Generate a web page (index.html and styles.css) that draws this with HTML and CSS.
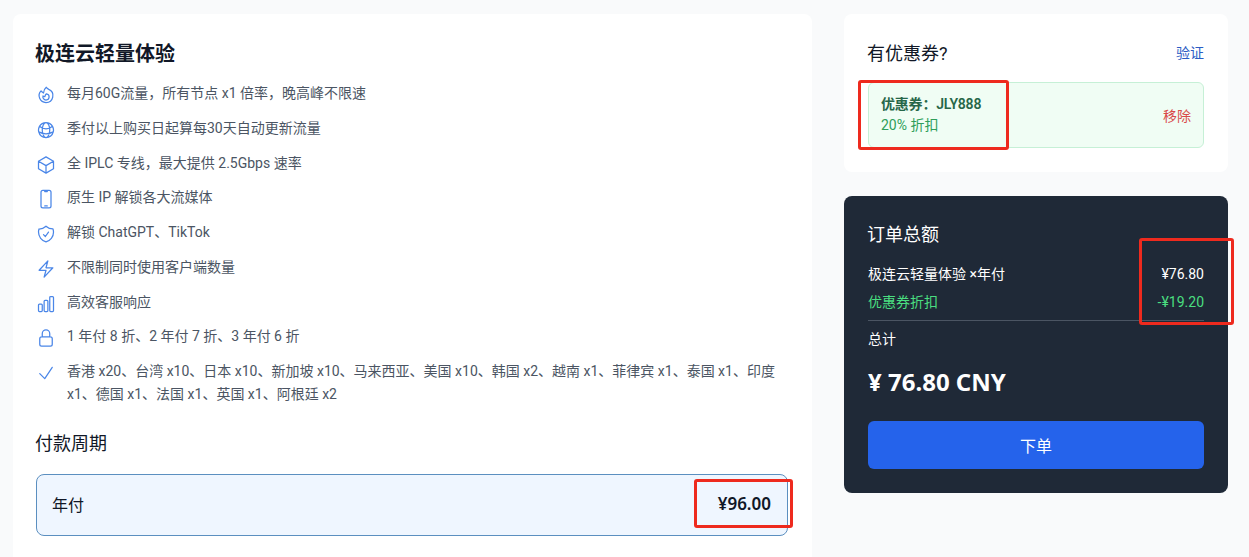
FILE: index.html
```html
<!DOCTYPE html>
<html lang="zh-CN">
<head>
<meta charset="utf-8">
<title>极连云轻量体验</title>
<link rel="stylesheet" href="styles.css">
</head>
<body>
<main class="layout">
  <section class="plan card">
    <h1 class="plan-title">极连云轻量体验</h1>
    <ul class="features">
      <li class="feature">
        <svg class="icon" viewBox="0 0 24 24"><path d="M15.362 5.214A8.252 8.252 0 0 1 12 21 8.25 8.25 0 0 1 6.038 7.047 8.287 8.287 0 0 0 9 9.601a8.983 8.983 0 0 1 3.361-6.867 8.21 8.21 0 0 0 3 2.48Z"/><path d="M12 18a3.75 3.75 0 0 0 .495-7.468 5.99 5.99 0 0 0-1.925 3.547 5.975 5.975 0 0 1-2.133-1.001A3.75 3.75 0 0 0 12 18Z"/></svg>
        <span class="feature-text">每月60G流量，所有节点 x1 倍率，晚高峰不限速</span>
      </li>
      <li class="feature">
        <svg class="icon" viewBox="0 0 24 24"><path d="M12 21a9.004 9.004 0 0 0 8.716-6.747M12 21a9.004 9.004 0 0 1-8.716-6.747M12 21c2.485 0 4.5-4.03 4.5-9S14.485 3 12 3m0 18c-2.485 0-4.5-4.03-4.5-9S9.515 3 12 3m0 0a8.997 8.997 0 0 1 7.843 4.582M12 3a8.997 8.997 0 0 0-7.843 4.582m15.686 0A11.953 11.953 0 0 1 12 10.5c-2.998 0-5.74-1.1-7.843-2.918m15.686 0A8.959 8.959 0 0 1 21 12c0 .778-.099 1.533-.284 2.253m0 0A17.919 17.919 0 0 1 12 16.5c-3.162 0-6.133-.815-8.716-2.247m0 0A9.015 9.015 0 0 1 3 12c0-1.605.42-3.113 1.157-4.418"/></svg>
        <span class="feature-text">季付以上购买日起算每30天自动更新流量</span>
      </li>
      <li class="feature">
        <svg class="icon" viewBox="0 0 24 24"><path d="m21 7.5-9-5.25L3 7.5m18 0-9 5.25m9-5.25v9l-9 5.25M3 7.5l9 5.25M3 7.5v9l9 5.25m0-9v9"/></svg>
        <span class="feature-text">全 IPLC 专线，最大提供 2.5Gbps 速率</span>
      </li>
      <li class="feature">
        <svg class="icon" viewBox="0 0 24 24"><path d="M10.5 1.5H8.25A2.25 2.25 0 0 0 6 3.75v16.5a2.25 2.25 0 0 0 2.25 2.25h7.5A2.25 2.25 0 0 0 18 20.25V3.75a2.25 2.25 0 0 0-2.25-2.25H13.5m-3 0V3h3V1.5m-3 0h3m-3 18.75h3"/></svg>
        <span class="feature-text">原生 IP 解锁各大流媒体</span>
      </li>
      <li class="feature">
        <svg class="icon" viewBox="0 0 24 24"><path d="M9 12.75 11.25 15 15 9.75m-3-7.036A11.959 11.959 0 0 1 3.598 6 11.99 11.99 0 0 0 3 9.749c0 5.592 3.824 10.29 9 11.623 5.176-1.332 9-6.03 9-11.622 0-1.31-.21-2.571-.598-3.751h-.152c-3.196 0-6.1-1.248-8.25-3.285Z"/></svg>
        <span class="feature-text">解锁 ChatGPT、TikTok</span>
      </li>
      <li class="feature">
        <svg class="icon" viewBox="0 0 24 24"><path d="m3.75 13.5 10.5-11.25L12 10.5h8.25L9.75 21.75 12 13.5H3.75Z"/></svg>
        <span class="feature-text">不限制同时使用客户端数量</span>
      </li>
      <li class="feature">
        <svg class="icon" viewBox="0 0 24 24"><path d="M3 13.125C3 12.504 3.504 12 4.125 12h2.25c.621 0 1.125.504 1.125 1.125v6.75C7.5 20.496 6.996 21 6.375 21h-2.25A1.125 1.125 0 0 1 3 19.875v-6.75ZM9.75 8.625c0-.621.504-1.125 1.125-1.125h2.25c.621 0 1.125.504 1.125 1.125v11.25c0 .621-.504 1.125-1.125 1.125h-2.25a1.125 1.125 0 0 1-1.125-1.125V8.625ZM16.5 4.125c0-.621.504-1.125 1.125-1.125h2.25C20.496 3 21 3.504 21 4.125v15.75c0 .621-.504 1.125-1.125 1.125h-2.25a1.125 1.125 0 0 1-1.125-1.125V4.125Z"/></svg>
        <span class="feature-text">高效客服响应</span>
      </li>
      <li class="feature">
        <svg class="icon" viewBox="0 0 24 24"><path d="M16.5 10.5V6.75a4.5 4.5 0 1 0-9 0v3.750m-.75 11.250h10.500a2.250 2.250 0 0 0 2.250-2.250v-6.750a2.250 2.250 0 0 0-2.250-2.250H6.750a2.250 2.250 0 0 0-2.250 2.250v6.750a2.250 2.250 0 0 0 2.250 2.250Z"/></svg>
        <span class="feature-text">1 年付 8 折、2 年付 7 折、3 年付 6 折</span>
      </li>
      <li class="feature">
        <svg class="icon" viewBox="0 0 24 24"><path d="m4.500 12.750 6 6 9-13.500"/></svg>
        <span class="feature-text">香港 x20、台湾 x10、日本 x10、新加坡 x10、马来西亚、美国 x10、韩国 x2、越南 x1、菲律宾 x1、泰国 x1、印度 x1、德国 x1、法国 x1、英国 x1、阿根廷 x2</span>
      </li>
    </ul>
    <h2 class="period-title">付款周期</h2>
    <div class="period">
      <span>年付</span>
      <strong class="period-price">¥96.00</strong>
      <i class="mark mark-price"></i>
    </div>
  </section>

  <aside class="side">
    <section class="coupon card">
      <div class="coupon-head">
        <h2 class="coupon-title">有优惠券?</h2>
        <a class="verify">验证</a>
      </div>
      <div class="coupon-box">
        <div class="coupon-info">
          <div class="coupon-code">优惠券：JLY888</div>
          <div class="coupon-off">20% 折扣</div>
        </div>
        <a class="remove">移除</a>
      </div>
      <i class="mark mark-coupon"></i>
    </section>

    <section class="total">
      <h2 class="total-title">订单总额</h2>
      <div class="line line-item"><span>极连云轻量体验 ×年付</span><span>¥76.80</span></div>
      <div class="line line-off"><span>优惠券折扣</span><span>-¥19.20</span></div>
      <div class="sum-label">总计</div>
      <div class="sum">¥ 76.80 CNY</div>
      <button class="order">下单</button>
      <i class="mark mark-total"></i>
    </section>
  </aside>
</main>
</body>
</html>
```

FILE: styles.css
```css
* { box-sizing: border-box; }
html, body { margin: 0; height: 100%; overflow: hidden; }
body {
  background: #f9fafb;
  color: #111827;
  font-family: Roboto, "Noto Sans CJK SC", sans-serif;
}
.layout {
  display: flex;
  align-items: flex-start;
  gap: 32px;
  height: 557px;
  overflow: hidden;
  padding: 14px 21px 0 13px;
}
.card { background: #fff; border-radius: 8px; }
.plan { width: 799px; height: 600px; padding: 25px 24px 24px 23px; flex: none; }
.plan-title { margin: 0 0 13px -1px; font-size: 20px; line-height: 30px; font-weight: 700; }
.features { list-style: none; margin: 0; padding: 0; }
.feature {
  display: flex;
  gap: 11px;
  margin-bottom: 11.750px;
  padding-right: 5px;
  font-size: 14px;
  line-height: 22.750px;
  color: #4b5563;
}
.feature-text { display: block; }
.icon {
  flex: none;
  width: 20px;
  height: 20px;
  margin-top: 3px;
  fill: none;
  stroke: #4a86e8;
  stroke-width: 1.500;
  stroke-linecap: round;
  stroke-linejoin: round;
}
.period-title { margin: 24px 0 17px -1px; font-size: 18px; line-height: 27px; font-weight: 400; }
.period {
  position: relative;
  display: flex;
  justify-content: space-between;
  align-items: center;
  height: 62px;
  padding: 0 16px 2px 15px;
  background: #eff6ff;
  border: 1px solid #5b8fc0;
  border-radius: 8px;
  font-size: 16px;
}
.period-price { font-family: "Noto Sans", sans-serif; font-size: 17px; font-weight: 600; }
.side { width: 384px; flex: none; display: flex; flex-direction: column; gap: 24px; }
.coupon { position: relative; height: 158px; padding: 24px; }
.coupon-head { display: flex; justify-content: space-between; align-items: center; margin-bottom: 16px; height: 28px; }
.coupon-title { margin: 0 0 0 -1px; font-size: 18px; font-weight: 400; }
.verify { font-size: 14px; color: #2b5cc4; }
.coupon-box {
  display: flex;
  justify-content: space-between;
  align-items: center;
  height: 66px;
  padding: 0 12px;
  background: #f0fdf4;
  border: 1px solid #c6f0d6;
  border-radius: 6px;
}
.coupon-code { font-size: 14px; line-height: 21px; font-weight: 600; color: #276749; letter-spacing: -0.2px; }
.coupon-off { font-size: 14px; line-height: 21px; color: #2f9e5a; }
.remove { font-size: 14px; color: #d94a4a; }
.total {
  position: relative;
  height: 297px;
  padding: 25px 24px 24px;
  background: #1f2937;
  border-radius: 8px;
  color: #fff;
}
.total-title { margin: 0 0 15px -1px; font-size: 18px; line-height: 28px; font-weight: 400; }
.line { display: flex; justify-content: space-between; font-size: 14px; line-height: 20px; }
.line-item { margin-bottom: 8px; }
.line-off { color: #4ade80; padding-bottom: 8px; border-bottom: 1px solid #4b5563; }
.sum-label { margin-top: 8px; font-size: 14px; line-height: 20px; }
.sum { margin-top: 15px; font-family: "Noto Sans", sans-serif; font-size: 24px; line-height: 36px; font-weight: 700; }
.order {
  display: block;
  width: 100%;
  height: 48px;
  margin-top: 21px;
  border: 0;
  border-radius: 6px;
  background: #2563eb;
  color: #fff;
  font: inherit;
  font-size: 16px;
}
.mark {
  position: absolute;
  border: 3px solid #ee2a1e;
  border-radius: 3px;
  pointer-events: none;
}
.mark-price { left: 657px; top: 4px; width: 99px; height: 49px; }
.mark-coupon { left: 14px; top: 66px; width: 151px; height: 70px; }
.mark-total { left: 295px; top: 42px; width: 95px; height: 87px; }
```
